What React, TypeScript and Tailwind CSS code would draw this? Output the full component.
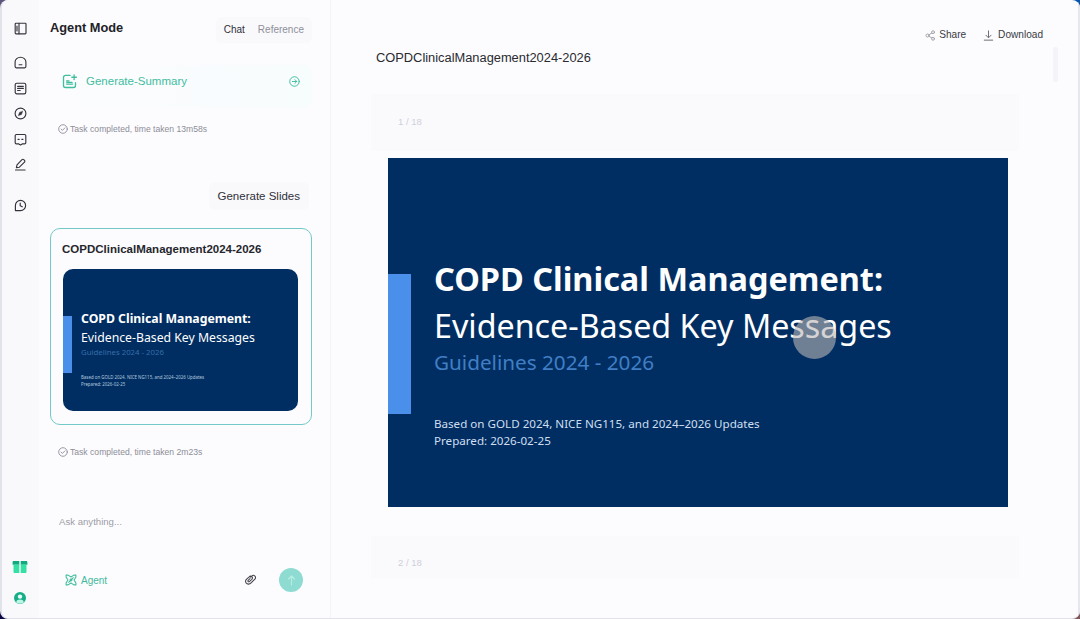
import { ReactNode } from "react";

type IconProps = {
  className?: string;
  children: ReactNode;
};

const Icon = ({ className = "size-[13px]", children }: IconProps) => (
  <svg
    viewBox="0 0 13 13"
    fill="none"
    stroke="currentColor"
    strokeWidth="1.15"
    strokeLinecap="round"
    strokeLinejoin="round"
    className={`block shrink-0 ${className}`}
  >
    {children}
  </svg>
);

const NAV_ICONS = [
  <>
    <path d="M1.1 10.6V5.9a5.4 4.7 0 0 1 10.8 0v4.7a1.2 1.2 0 0 1-1.2 1.2H2.3a1.2 1.2 0 0 1-1.2-1.2Z" />
    <path d="M5.1 8.7h2.8" />
  </>,
  <>
    <rect x="1.2" y="1.2" width="10.6" height="10.6" rx="1.6" />
    <path d="M3.6 4.3h5.8M3.6 6.4h5.8M3.6 8.5h2.6" />
  </>,
  <>
    <circle cx="6.5" cy="6.5" r="5.4" />
    <path d="M8.7 4.3 7.5 7.5 4.3 8.7l1.2-3.2Z" fill="currentColor" strokeWidth=".4" />
  </>,
  <>
    <path d="M2.4 1.5h8.2a1.2 1.2 0 0 1 1.2 1.2v7a1.2 1.2 0 0 1-1.2 1.2H8.2l-1.7 1-1.7-1H2.4a1.2 1.2 0 0 1-1.2-1.2v-7a1.2 1.2 0 0 1 1.2-1.2Z" />
    <path d="M4 6.3h1.2M7.8 6.3H9" />
  </>,
  <>
    <path d="M2.4 9.6 3 6.8 8 1.6a1.2 1.2 0 0 1 1.7 0l.8.8a1.2 1.2 0 0 1 0 1.7L5.4 9.2ZM1.5 12h9.6" />
  </>,
];

const Sidebar = () => (
  <nav className="flex w-[37px] shrink-0 flex-col items-center bg-[#f9f9fb] pt-[22px] pr-px pb-[13px] text-[#34343c]">
    <Icon>
      <rect x="1.2" y="1.2" width="10.8" height="10.6" rx=".8" />
      <path d="M5 1.2v10.6M3 4v5" />
    </Icon>
    <div className="mt-[21px] flex flex-col gap-[12.6px]">
      {NAV_ICONS.map((icon, i) => (
        <Icon key={i}>{icon}</Icon>
      ))}
    </div>
    <Icon className="mt-[28px] size-[13px]">
      <path d="M1.4 11.6V6.5a5.1 5.1 0 1 1 5.1 5.1Z" />
      <path d="M6.2 4v2.8l2.1 1" />
    </Icon>
    <svg viewBox="0 0 16 14" className="mt-auto h-[14px] w-4">
      <path d="M1 1h6.3v3.7H.6V2Zm7.7 0H15l.4 1.4v2.3H8.7Z" fill="#12a981" />
      <path d="M1.5 4.5h5.8V13H2.4a1 1 0 0 1-.9-1Zm7.2 0h5.8V12a1 1 0 0 1-.9 1H8.7Z" fill="#35e0a5" />
    </svg>
    <svg viewBox="0 0 14 14" className="mt-[17px] size-[14px]">
      <circle cx="7" cy="7" r="6" fill="#16ad88" />
      <circle cx="7" cy="5.6" r="2.2" fill="#e9fbf6" />
      <path d="M3.2 11.5C3.4 9 5 8.4 7 8.4s3.6.6 3.8 3.1C9 13 5 13 3.2 11.5Z" fill="#bdf5e4" />
    </svg>
  </nav>
);

const TaskStatus = ({ time }: { time: string }) => (
  <div className="flex h-3 items-center gap-[2px] pl-[8px] text-[#8d8d98]">
    <Icon className="size-[10px]">
      <circle cx="6.5" cy="6.5" r="5.6" />
      <path d="m4 6.6 1.8 1.7L9 5" />
    </Icon>
    <span className="text-[8.6px] leading-3">
      Task completed, time taken {time}
    </span>
  </div>
);

const ResultCard = () => (
  <div className="h-[197px] w-[262px] rounded-[10px] border border-[#72c9c8] bg-[#fcfcfe] px-3 pt-3">
    <h2 className="-ml-px text-[11.5px] leading-4 font-bold text-[#26262d]">
      COPDClinicalManagement2024-2026
    </h2>
    <div className="mt-3 flex h-[142px] w-[235px] items-start overflow-hidden rounded-[10px] bg-[#002e62] font-['Noto_Sans',sans-serif] text-white">
      <div className="mt-[47px] h-[57px] w-[9px] bg-[#4a90ea]" />
      <div className="mt-[41px] ml-[9px] whitespace-nowrap">
        <p className="text-[12.27px] leading-[18.5px] font-bold">
          COPD Clinical Management:
        </p>
        <p className="text-[12.25px] leading-[18.5px]">
          Evidence-Based Key Messages
        </p>
        <p className="text-[7.8px] leading-[10px] text-[#376da8]">
          Guidelines 2024 - 2026
        </p>
        <div className="mt-[17px] text-[4.4px] leading-[6.5px] text-[#b4c8df]">
          <p>Based on GOLD 2024, NICE NG115, and 2024–2026 Updates</p>
          <p>Prepared: 2026-02-25</p>
        </div>
      </div>
    </div>
  </div>
);

const ChatPanel = () => (
  <section className="flex w-[292px] shrink-0 flex-col border-r border-[#f3f3f8] pl-[11px]">
    <header className="mt-[18px] flex h-5 items-center justify-between pr-[18px]">
      <h1 className="text-[12.8px] font-bold text-[#222228]">Agent Mode</h1>
      <div className="mt-[3px] flex h-[26px] items-center gap-[13px] rounded-md bg-[#f9f9fc] px-2 text-[10px]">
        <span className="text-[#303038]">Chat</span>
        <span className="text-[#8f8f99]">Reference</span>
      </div>
    </header>

    <div className="mt-[27px] flex h-[43px] w-[262px] items-start rounded-lg bg-gradient-to-r from-[#fcfcfe] to-[#f7fcfd] pt-2 pr-3 pl-3 text-[#42bd9e]">
      <Icon className="mt-px size-[15px]">
        <path d="M7 1.2H3a1.7 1.7 0 0 0-1.7 1.7V10A1.7 1.7 0 0 0 3 11.7h7A1.7 1.7 0 0 0 11.7 10V7.5M10.5.8v4M8.5 2.8h4M4 6h2M4 8.7h5.2M4.2 7.3h4.5" />
      </Icon>
      <span className="ml-[9px] text-[11.5px] leading-4">Generate-Summary</span>
      <Icon className="mt-[2.5px] ml-auto size-[11px]">
        <circle cx="6.5" cy="6.5" r="5.6" />
        <path d="M4 6.5h5M7 4.3l2.2 2.2L7 8.7" />
      </Icon>
    </div>

    <div className="mt-[15px]">
      <TaskStatus time="13m58s" />
    </div>

    <div className="mt-[47px] mr-[21px] flex h-[28px] items-center self-end rounded-md bg-[#f9f9fc] px-[9px] pt-px text-[11.5px] text-[#303038]">
      Generate Slides
    </div>

    <div className="mt-[18px]">
      <ResultCard />
    </div>

    <div className="mt-[21px]">
      <TaskStatus time="2m23s" />
    </div>

    <div className="mt-[56px] flex flex-col pl-[9px]">
      <p className="text-[9.6px] leading-4 text-[#9c9ca6]">Ask anything...</p>
      <div className="mt-[38px] flex h-6 items-center">
        <Icon className="ml-[6px] size-[12px] text-[#42bd9e]">
          <path d="M6.5 3.2 3.4 1.2H1.2v2.2l2 3.1-2 3.1v2.2h2.2l3.1-2 3.1 2h2.2V9.6l-2-3.1 2-3.1V1.2H9.6ZM4 9l5-5" />
          <circle cx="6.5" cy="6.5" r="1" />
        </Icon>
        <span className="ml-1 text-[10px] text-[#42b99d]">Agent</span>
        <Icon className="ml-[137px] size-[12px] text-[#45454d]">
          <path d="M7 3.5 8.4 2.2a2.4 2.4 0 0 1 3.4 3.4L7.4 10a3.4 3.4 0 0 1-5.1-.4 3 3 0 0 1 .3-3.8l3-2.8a2 2 0 0 1 2.9 2.8L5.8 8.2a.9.9 0 0 1-1.3-1.3l2-1.9" />
        </Icon>
        <div className="ml-[23px] flex size-6 items-center justify-center rounded-full bg-[#8edbd2] text-[#b5ede3]">
          <Icon>
            <path d="M6.5 11V2M3.5 5l3-3 3 3" />
          </Icon>
        </div>
      </div>
    </div>
  </section>
);

const Slide = () => (
  <div className="relative flex h-[349px] w-[620px] items-start bg-[#002e62] font-['Noto_Sans',sans-serif] text-white">
    <div className="mt-[116px] h-[140px] w-[23px] bg-[#4a90ea]" />
    <div className="mt-[97px] ml-[23px] whitespace-nowrap">
      <p className="text-[32.45px] leading-[47px] font-bold">
        COPD Clinical Management:
      </p>
      <p className="text-[32.25px] leading-[47px]">
        Evidence-Based Key Messages
      </p>
      <p className="mt-px text-[20.7px] leading-6 text-[#407fc6]">
        Guidelines 2024 - 2026
      </p>
      <div className="mt-[42px] text-[11.62px] leading-[16.5px] text-[#cfdff0]">
        <p>Based on GOLD 2024, NICE NG115, and 2024–2026 Updates</p>
        <p>Prepared: 2026-02-25</p>
      </div>
    </div>
    {/* pointer highlight */}
    <div className="absolute top-[158px] left-[405px] size-[43px] rounded-full bg-[#b9b6b5]/60" />
  </div>
);

const PageLabel = ({ page }: { page: number }) => (
  <span className="text-[9.5px] leading-3 text-[#cfcfda]">{page} / 18</span>
);

const Preview = () => (
  <main className="flex flex-1 flex-col border-r-2 border-[#e6e6ee]">
    <div className="mt-[28px] flex h-[14px] items-center justify-end pr-[35px] text-[10.1px] text-[#3a3a42]">
      <Icon className="size-[11px] text-[#a0a0a8]">
        <circle cx="3" cy="6.5" r="1.8" />
        <circle cx="9.5" cy="2.6" r="1.7" />
        <circle cx="9.5" cy="10.4" r="1.7" />
        <path d="m4.6 5.6 3.4-2M4.6 7.4l3.4 2" />
      </Icon>
      <span className="ml-[3px]">Share</span>
      <Icon className="ml-[17px] size-[11px] text-[#6c6c74]">
        <path d="M6.5 1v8M3.5 6.2l3 3 3-3M1.5 12h10" />
      </Icon>
      <span className="ml-[4px]">Download</span>
    </div>
    <div className="flex h-[52px] items-start justify-between pr-[20px] pl-[45px]">
      <h2 className="mt-[8px] text-[12.85px] leading-4 text-[#2a2a30]">
        COPDClinicalManagement2024-2026
      </h2>
      <div className="mt-[5px] h-[35px] w-[5px] rounded-full bg-[#f3f3f8]" />
    </div>
    <div className="ml-10 flex h-[57px] w-[648px] items-start bg-[#fafafc] pt-[22px] pl-[27px]">
      <PageLabel page={1} />
    </div>
    <div className="mt-[7px] ml-[57px]">
      <Slide />
    </div>
    <div className="mt-[29px] ml-10 flex h-[43px] w-[648px] items-start bg-[#fafafc] pt-[21px] pl-[27px]">
      <PageLabel page={2} />
    </div>
  </main>
);

const App = () => (
  <div className="relative h-[619px] w-[1080px] overflow-hidden font-['Liberation_Sans',Arial,sans-serif]">
    {/* desktop showing behind the rounded window corners */}
    <div className="absolute top-0 left-0 size-4 bg-[#5c557d]" />
    <div className="absolute top-0 right-0 size-4 bg-[#0756ae]" />
    <div className="absolute bottom-0 left-0 size-4 bg-[#0b0743]" />
    <div className="absolute right-0 bottom-0 size-4 bg-[#80565c]" />
    <div className="relative flex h-full overflow-hidden rounded-[8px] border-b border-l-2 border-[#e2e2ea] bg-[#fcfcfe]">
      <Sidebar />
      <ChatPanel />
      <Preview />
    </div>
  </div>
);

export default App;
